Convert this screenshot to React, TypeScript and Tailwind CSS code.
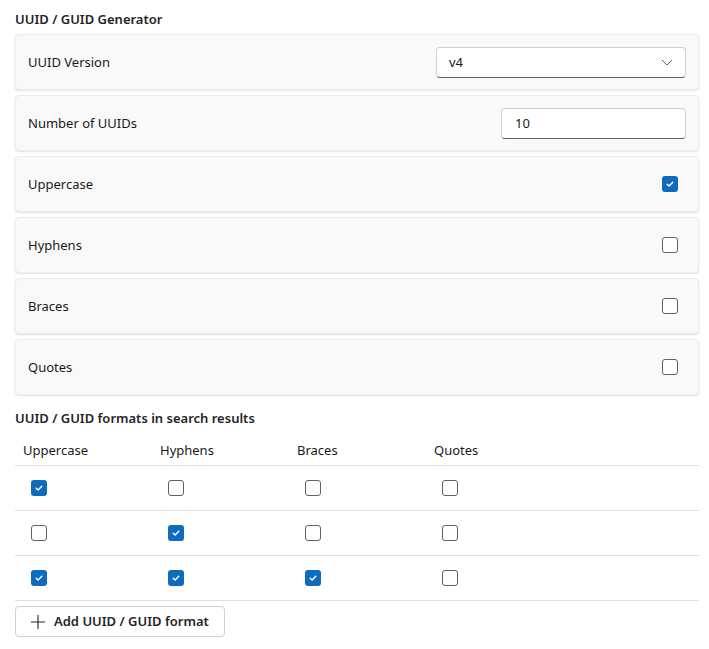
import React from "react";

function CheckBox({ checked }: { checked: boolean }) {
  if (checked) {
    return (
      <span className="flex h-4 w-4 items-center justify-center rounded-[3px] bg-[#0f6cbd]">
        <svg width="10" height="10" viewBox="0 0 10 10" fill="none">
          <path d="M2.2 5.2 L4.1 7 L7.8 3.2" stroke="white" strokeWidth="1.4" strokeLinecap="round" strokeLinejoin="round" />
        </svg>
      </span>
    );
  }
  return <span className="block h-4 w-4 rounded-[3px] border border-[#616161] bg-white" />;
}

function Card({ label, children }: { label: string; children: React.ReactNode }) {
  return (
    <div className="flex h-[56px] items-center justify-between rounded-[4px] border border-[#ececec] bg-[#f9f9f9] px-3 shadow-[0_1px_2px_rgba(0,0,0,0.12)]">
      <span className="pt-[2px] text-[13px] text-[#1a1a1a]">{label}</span>
      {children}
    </div>
  );
}

const columns = ["Uppercase", "Hyphens", "Braces", "Quotes"];
const rows = [
  [true, false, false, false],
  [false, true, false, false],
  [true, true, true, false],
];

export default function App() {
  return (
    <div className="min-h-[649px] bg-white pl-[15px] pr-[10px] pt-[9px] text-[#1a1a1a] [font-family:'Noto_Sans',sans-serif]">
      <h2 className="mb-[5px] text-[13px] leading-5 font-semibold text-[#242424]">UUID / GUID Generator</h2>
      <div className="flex flex-col gap-[5px]">
        <Card label="UUID Version">
          <div className="flex h-[31px] w-[250px] items-center justify-between rounded-[4px] border border-[#d1d1d1] border-b-[#616161] bg-white pl-3 pr-3">
            <span className="pt-[1px] text-[13px]">v4</span>
            <svg width="12" height="12" viewBox="0 0 12 12" fill="none">
              <path d="M1 4 L6 9 L11 4" stroke="#616161" strokeWidth="1" />
            </svg>
          </div>
        </Card>
        <Card label="Number of UUIDs">
          <div className="flex h-[31px] w-[185px] items-center rounded-[4px] border border-[#d1d1d1] border-b-[#616161] bg-white pl-[13px]">
            <span className="pt-[1px] text-[13px]">10</span>
          </div>
        </Card>
        <Card label="Uppercase">
          <span className="mr-2">
            <CheckBox checked />
          </span>
        </Card>
        <Card label="Hyphens">
          <span className="mr-2">
            <CheckBox checked={false} />
          </span>
        </Card>
        <Card label="Braces">
          <span className="mr-2">
            <CheckBox checked={false} />
          </span>
        </Card>
        <Card label="Quotes">
          <span className="mr-2">
            <CheckBox checked={false} />
          </span>
        </Card>
      </div>

      <h2 className="mt-[13px] text-[13px] leading-5 font-semibold text-[#242424]">UUID / GUID formats in search results</h2>
      <div className="mt-[7px]">
        <div className="grid h-[31px] grid-cols-[137px_137px_137px_137px] items-center border-b border-[#e0e0e0] pl-2 text-[13px]">
          {columns.map((c) => (
            <span key={c} className="leading-5">{c}</span>
          ))}
        </div>
        {rows.map((r, i) => (
          <div key={i} className="grid h-[45px] grid-cols-[137px_137px_137px_137px] items-center border-b border-[#e0e0e0] pl-4">
            {r.map((v, j) => (
              <CheckBox key={j} checked={v} />
            ))}
          </div>
        ))}
      </div>
      <button className="mt-[5px] flex h-[31px] w-[210px] items-center gap-2 rounded-[4px] border border-[#d1d1d1] bg-white pl-[14px] text-[13px] font-semibold text-[#242424]">
        <svg width="16" height="16" viewBox="0 0 16 16" fill="none">
          <path d="M8 1 V15 M1 8 H15" stroke="#242424" strokeWidth="1.1" />
        </svg>
        Add UUID / GUID format
      </button>
    </div>
  );
}
